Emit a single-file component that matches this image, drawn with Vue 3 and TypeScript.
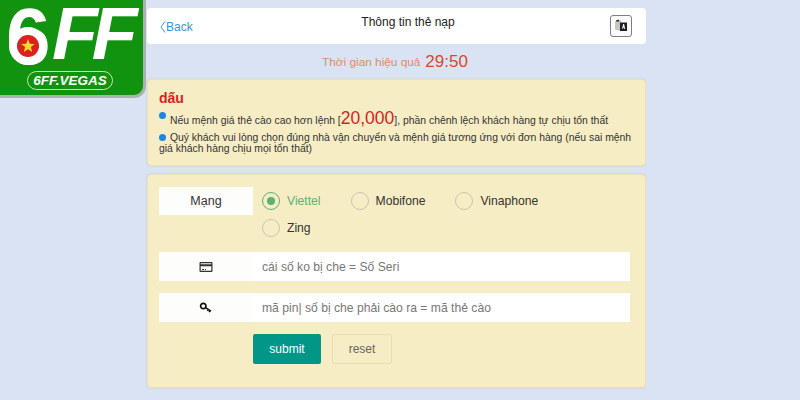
<template>
  <div class="page">
    <header class="top-bar">
      <a class="back">
        <svg width="6" height="12" viewBox="0 0 6 12"><path d="M5 .5 1 6l4 5.500" fill="none" stroke="#3b93d0" /></svg>
        Back
      </a>
      <h1>Thông tin thẻ nạp</h1>
      <button class="lang" type="button" aria-label="translate">
        <svg width="14" height="14" viewBox="0 0 14 14">
          <path d="M1 2.500 7 1v11L1 10.500z" fill="#c9c5bc" />
          <path d="M6 3.500h7V12H6z" fill="#1d1f24" />
          <path d="M8 10 9.200 5h.9L11.200 10h-.9L10 8.800H9L8.800 10z" fill="#fff" />
          <path d="M2 1.500 5 .5v2H2z" fill="#1d1f24" />
        </svg>
      </button>
    </header>

    <p class="timer">Thời gian hiệu quả <span>{{ countdown }}</span></p>

    <section class="card notice">
      <h2>dấu</h2>
      <p class="first"><i class="dot raised"></i> Nếu mệnh giá thẻ cào cao hơn lệnh [<b>20,000</b>], phần chênh lệch khách hàng tự chịu tổn thất</p>
      <p><i class="dot"></i> Quý khách vui lòng chọn đúng nhà vận chuyển và mệnh giá tương ứng với đơn hàng (nếu sai mệnh giá khách hàng chịu mọi tổn thất)</p>
    </section>

    <form class="card form" @submit.prevent>
      <div class="row network">
        <div class="addon">Mạng</div>
        <div class="radios">
          <label v-for="n in networks" :key="n" class="radio" :class="{ checked: n === selected }" @click="selected = n">
            <span class="ring"></span>{{ n }}
          </label>
        </div>
      </div>

      <div class="row field">
        <div class="addon">
          <svg width="14" height="12" viewBox="0 0 14 12">
            <path fill-rule="evenodd" d="M1.500 1h11A1 1 0 0 1 13.500 2v8a1 1 0 0 1-1 1h-11a1 1 0 0 1-1-1V2a1 1 0 0 1 1-1zM1.700 5.200v4.600h10.600V5.200zM1.700 2.200v1h10.600v-1z" fill="#333" />
            <path d="M3 8h2v1H3zM6 8h1v1H6z" fill="#333" />
          </svg>
        </div>
        <input type="text" placeholder="cái số ko bị che = Số Seri" />
      </div>

      <div class="row field">
        <div class="addon">
          <svg width="14" height="12" viewBox="0 0 14 12">
            <circle cx="4.300" cy="4" r="2.700" fill="none" stroke="#111" stroke-width="1.700" />
            <path d="M6.500 5.700 12 9.200M9.300 7.500 8.500 9M11 8.600l-.8 1.500" fill="none" stroke="#111" stroke-width="1.500" />
          </svg>
        </div>
        <input type="text" placeholder="mã pin| số bị che phải cào ra = mã thẻ cào" />
      </div>

      <div class="actions">
        <button class="submit" type="submit">submit</button>
        <button class="reset" type="reset">reset</button>
      </div>
    </form>

    <div class="logo">
      <span class="six">6</span>
      <i class="flag"><svg width="16" height="16" viewBox="0 0 16 16"><path d="m8 1 1.800 4.700 5 .2-3.900 3.100 1.300 4.900L8 11.200 3.800 13.900l1.300-4.900L1.200 5.900l5-.2z" fill="#ffd92e" /></svg></i>
      <span class="ff">FF</span>
      <span class="domain">6FF.VEGAS</span>
    </div>
  </div>
</template>

<script setup lang="ts">
import { ref } from 'vue'

const countdown = ref('29:50')
const networks = ['Viettel', 'Mobifone', 'Vinaphone', 'Zing']
const selected = ref('Viettel')
</script>

<style>
html,
body {
  margin: 0;
  background: #d9e3f3;
}
</style>

<style scoped>
.page {
  box-sizing: border-box;
  width: 646px;
  height: 400px;
  padding: 8px 0 0 147px;
  font-family: "Liberation Sans", Arial, sans-serif;
  overflow: hidden;
}

.top-bar {
  position: relative;
  height: 36px;
  display: flex;
  align-items: center;
  justify-content: space-between;
  padding: 0 14px 0 13px;
  background: #fff;
  border-radius: 4px;
}

.back {
  display: flex;
  align-items: center;
  gap: 0;
  color: #3b93d0;
  font-size: 12px;
  margin-top: 1px;
}

h1 {
  position: absolute;
  left: 23px;
  right: 0;
  top: 6px;
  margin: 0;
  font-size: 12px;
  line-height: 16px;
  font-weight: 400;
  color: #222;
  text-align: center;
}

.lang {
  display: flex;
  align-items: center;
  justify-content: center;
  width: 22px;
  height: 22px;
  padding: 0;
  background: #fbfbfb;
  border: 1px solid #808080;
  border-radius: 3px;
}

.timer {
  height: 35px;
  margin: 0;
  display: flex;
  align-items: center;
  justify-content: center;
  gap: 5px;
  font-size: 11.800px;
  color: #e08a6c;
  padding-right: 3px;
}

.timer span {
  font-size: 17px;
  color: #d9482b;
}

.card {
  box-sizing: border-box;
  background: #f7edc5;
  border: 1px solid #ecdfba;
  border-radius: 4px;
  box-shadow: 0 0 2px rgba(160, 150, 120, 0.3);
}

.notice {
  height: 87px;
  padding: 10px 10px 0 11px;
  margin-bottom: 8px;
}

.notice h2 {
  margin: 0;
  font-size: 14px;
  line-height: 16px;
  color: #d81e1e;
}

.notice p {
  margin: 0;
  font-size: 10.400px;
  line-height: 11px;
  color: #333;
}

.notice p.first {
  margin: 4px 0 3px;
  line-height: 17px;
}

.notice b {
  font-size: 17.500px;
  font-weight: 400;
  color: #d81e1e;
  line-height: 17px;
}

.dot {
  display: inline-block;
  width: 7px;
  height: 7px;
  margin-right: 1px;
  border-radius: 50%;
  background: #1f86e0;
}

.dot.raised {
  vertical-align: 5px;
}

.form {
  height: 214px;
  padding: 12px 15px 0 11px;
}

.row {
  display: flex;
}

.addon {
  flex: none;
  width: 94px;
  height: 28px;
  display: flex;
  align-items: center;
  justify-content: center;
  background: #fdfdfc;
  font-size: 12.500px;
  color: #333;
}

.network {
  min-height: 65px;
}

.radios {
  display: flex;
  flex-wrap: wrap;
  align-content: flex-start;
  padding-left: 9px;
  row-gap: 5px;
  width: 340px;
}

.radio {
  display: flex;
  align-items: center;
  gap: 7px;
  height: 18px;
  margin-top: 5px;
  margin-bottom: -1px;
  margin-right: 30px;
  font-size: 12.150px;
  color: #333;
}

.ring {
  box-sizing: border-box;
  display: flex;
  align-items: center;
  justify-content: center;
  width: 18px;
  height: 18px;
  border: 1px solid #c9c5b4;
  border-radius: 50%;
}

.checked {
  color: #5cb176;
}

.checked .ring {
  border-color: #5cb176;
}

.checked .ring::after {
  content: '';
  width: 8px;
  height: 8px;
  border-radius: 50%;
  background: #5cb176;
}

.field {
  margin-bottom: 12px;
}

.field .addon {
  height: 29px;
}

.field input {
  flex: 1;
  min-width: 0;
  height: 29px;
  box-sizing: border-box;
  border: 0;
  outline: 0;
  padding: 0 9px;
  background: #fff;
  font: 12.150px "Liberation Sans", Arial, sans-serif;
  color: #333;
}

.field input::placeholder {
  color: #777;
}

.actions {
  display: flex;
  gap: 11px;
  padding-left: 94px;
}

.actions button {
  height: 30px;
  box-sizing: border-box;
  border-radius: 2px;
  font: 12px "Liberation Sans", Arial, sans-serif;
}

.submit {
  width: 68px;
  background: #009688;
  border: 0;
  color: #fff;
}

.reset {
  width: 60px;
  background: transparent;
  border: 1px solid #e6dcb8;
  color: #666;
}

.logo {
  position: absolute;
  left: 0;
  top: 0;
  width: 143px;
  height: 95px;
  background: #12930f;
  border-right: 3px solid #a9b3ad;
  border-bottom: 3px solid #a9b3ad;
  border-bottom-right-radius: 12px;
  color: #fff;
  font-family: "Liberation Sans", Arial, sans-serif;
  font-weight: 700;
  overflow: hidden;
}

.six {
  position: absolute;
  left: 6px;
  top: 7px;
  font-size: 80px;
  line-height: 60px;
}

.flag {
  box-sizing: border-box;
  position: absolute;
  left: 9px;
  top: 27px;
  width: 38px;
  height: 38px;
  display: flex;
  align-items: center;
  justify-content: center;
  border: 8px solid #fff;
  border-radius: 50%;
  background: #d9211d;
}

.ff {
  position: absolute;
  left: 52px;
  top: 4px;
  font-size: 75px;
  line-height: 58px;
  font-style: italic;
  letter-spacing: -6px;
}

.domain {
  box-sizing: border-box;
  position: absolute;
  left: 27px;
  top: 71px;
  width: 86px;
  height: 19px;
  border: 1px solid #c6e6a8;
  border-radius: 10px;
  font-size: 13.500px;
  line-height: 17px;
  font-style: italic;
  text-align: center;
}
</style>
